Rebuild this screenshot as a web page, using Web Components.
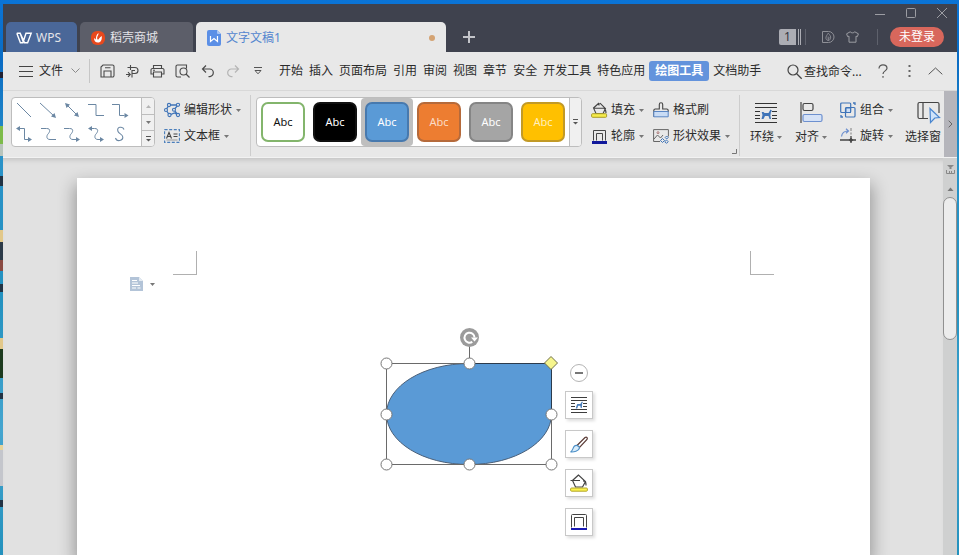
<!DOCTYPE html>
<html lang="zh-CN">
<head>
<meta charset="utf-8">
<title>文字文稿1</title>
<style>
html,body{margin:0;height:100%}
body{overflow:hidden;font:12px/16px "Noto Sans","Noto Sans CJK SC",sans-serif;color:#2b2b2b;
background:
linear-gradient(#0000 72px,#223 72px 78px,#0000 78px 126px,#7dbb4a 126px 144px,#b8c4bc 144px 156px,#0000 156px 176px,#234 176px 186px,#0000 186px 230px,#e2c88a 230px 242px,#2c3a48 242px 260px,#8a4a42 260px 271px,#0000 271px 284px,#234 284px 292px,#0000 292px 338px,#e2c88a 338px 349px,#1c3a1e 349px 378px,#0000 378px 393px,#234 393px 399px,#0000 399px 445px,#e6d49a 445px 450px,#c4c6cc 450px 486px,#0000 486px 500px,#234 500px 507px,#0000 507px) left/3px 100% no-repeat,
linear-gradient(#0b74d6 0,#0a6cc4 60px,#2a92c8 160px,#2492c0 300px,#45a5cf 430px,#2391bd 100%)}
</style>
</head>
<body>
<wps-window></wps-window>
<script>
const ICONS = {
  // [width, height, markup]
  wps:[16,12,'<path d="M.8 1.2h3.4l3 8.6L10 1.2h5.200l-3.600 9.600h-3L4.200 1.200M.8 1.200l3.600 9.600h2.800" fill="none" stroke="#fff" stroke-width="1.400"/>'],
  docer:[14,14,'<rect width="14" height="14" rx="6" fill="#e8491d"/><path d="M7.500 2c.4 2-1.400 3-1.400 5 0 .9.500 1.500.9 1.800C8.200 7.800 8.600 6.300 10.800 5c.3 3.500-.8 6.600-3.800 6.600C4.600 11.600 3 9.900 3 7.200c1 .3 1.700.8 2 1.500C4.700 6 5.400 3.500 7.500 2z" fill="#fff"/>'],
  writer:[14,16,'<path d="M2 0h8l4 4v10a2 2 0 0 1-2 2H2a2 2 0 0 1-2-2V2a2 2 0 0 1 2-2z" fill="#5b8fe6"/><path d="M10 0l4 4h-3a1 1 0 0 1-1-1z" fill="#a9c5f3"/><path d="M3.500 6v5.500l3.500-3 3.500 3V6" fill="none" stroke="#fff" stroke-width="1.200"/>'],
  plus:[12,12,'<path d="M6 0v12M0 6h12" stroke="#c3c4c9" stroke-width="2"/>'],
  min:[10,10,'<path d="M0 6.500h10" stroke="#9c9da3"/>'],
  max:[10,10,'<rect x=".5" y=".5" width="9" height="9" rx="1" fill="none" stroke="#9c9da3"/>'],
  close:[10,10,'<path d="M0 0l10 10M10 0L0 10" stroke="#9c9da3"/>'],
  leaf:[12,12,'<path d="M.5.500h6a5.500 5.500 0 0 1 0 11h-6z" fill="none" stroke="#8f9097"/><path d="M6.200 2.200C8 4 9 5.500 8.600 7.300 8.200 8.800 7.300 9.300 6.200 9.500 5 9.300 4 8.600 3.900 7.100 3.900 5.500 5 4 6.200 2.200zM6.200 10V5.500M6.200 8.200l1.600-1.500" fill="none" stroke="#8f9097" stroke-width=".9"/>'],
  shirt:[13,12,'<path d="M4.200.800C5 2.200 8 2.200 8.800.800L12.400 2.800 11.400 5.600 10 5.200v6H3v-6L1.600 5.600.600 2.800z" fill="none" stroke="#9c9da3"/>'],
  burger:[14,12,'<path d="M0 1.500h14M0 6.500h14M0 11.500h14" stroke="#444"/>'],
  down:[9,6,'<path d="M.5.500l4 4 4-4" fill="none" stroke="#8a8a8a"/>'],
  up:[15,8,'<path d="M.7 7.300L7.500 1l6.800 6.300" fill="none" stroke="#555"/>'],
  save:[15,14,'<path d="M3 1h9.500a1.500 1.500 0 0 1 1.500 1.500V11.500a1.500 1.500 0 0 1-1.500 1.500H1V3zM4 13V7h7v6M5 3.800h5.500" fill="none" stroke="#4a4a4a" stroke-width="1.100"/>'],
  convert:[15,14,'<path d="M2.500 3.500h7.500a3 3 0 0 1 0 6h-3M5.500 1v5M7 13.500V6.500h3M1 10.500h4.500M3 8.200l2.300 2.300L3 12.800" fill="none" stroke="#4a4a4a" stroke-width="1.100"/>'],
  print:[15,14,'<path d="M3.500 4.500v-3h8v3M3.500 10H1V6a1.500 1.500 0 0 1 1.500-1.500h10A1.500 1.500 0 0 1 14 6v4h-2.500M3.500 8h8v5h-8zM3 6.300h2" fill="none" stroke="#4a4a4a" stroke-width="1.100"/>'],
  preview:[15,14,'<path d="M6 13H2.500A1.500 1.500 0 0 1 1 11.500v-9A1.500 1.500 0 0 1 2.500 1h9v3.500" fill="none" stroke="#4a4a4a" stroke-width="1.100"/><circle cx="8.500" cy="7.500" r="3.500" fill="none" stroke="#4a4a4a" stroke-width="1.100"/><path d="M11 10l3.500 3.500" stroke="#4a4a4a" stroke-width="1.200"/>'],
  undo:[14,14,'<path d="M5 1.500L1.500 5 5 8.500M1.500 5h7.200a3.600 3.600 0 0 1 3.600 3.600A4 4 0 0 1 9 12.600H7.500" fill="none" stroke="#4a4a4a" stroke-width="1.200"/>'],
  redo:[14,14,'<path d="M9 1.500L12.500 5 9 8.500M12.500 5H5.300a3.600 3.600 0 0 0-3.600 3.600A4 4 0 0 0 5 12.600H6.500" fill="none" stroke="#b4b4b4" stroke-width="1.200"/>'],
  more:[8,8,'<path d="M0 .500h8" stroke="#555"/><path d="M1 3.500h6L4 6.800z" fill="none" stroke="#555"/>'],
  search:[15,15,'<circle cx="6" cy="6" r="5" fill="none" stroke="#444" stroke-width="1.200"/><path d="M9.700 9.700l5 5" stroke="#444" stroke-width="1.300"/>'],
  help:[10,14,'<path d="M1 4.500C1 2 2.800.800 5 .800S9 2.200 9 4.300C9 7 5 6.800 5 10M5 12v1.700" fill="none" stroke="#555" stroke-width="1.200"/>'],
  dots:[3,12,'<path d="M.5 0h2v2h-2zM.5 5h2v2h-2zM.5 10h2v2h-2z" fill="#666"/>'],
  tri:[5,3,'<path d="M0 0h5L2.500 3z" fill="#777"/>'],
  triup:[7,4,'<path d="M.5 4h6L3.500.5z" fill="#777"/>'],
  triupOff:[5,3,'<path d="M0 3h5L2.500 0z" fill="#b4b4b4"/>'],
  trimore:[5,6,'<path d="M0 .500h5" stroke="#555"/><path d="M0 3h5L2.500 5.500z" fill="#555"/>'],
  l1:[16,16,'<path d="M1 1l14 14" stroke="#6b87a3"/>'],
  l2:[16,16,'<path d="M0 1l14 13" stroke="#6b87a3"/><path d="M16 16l-5-1.500 3.500-3.500z" fill="#6b87a3"/>'],
  l3:[16,16,'<path d="M3 3l10 10" stroke="#6b87a3"/><path d="M15 15l-5-1.500 3.500-3.500zM1 1l5 1.500-3.500 3.500z" fill="#6b87a3"/>'],
  l4:[16,16,'<path d="M0 2.500h8v11h8" fill="none" stroke="#6b87a3"/>'],
  l5:[16,16,'<path d="M0 2.500h7.500v11h5" fill="none" stroke="#6b87a3"/><path d="M16.500 13.500l-4 2.500v-5z" fill="#6b87a3"/>'],
  l6:[16,16,'<path d="M3 2.500h5.500v11h4" fill="none" stroke="#6b87a3"/><path d="M16 13.500l-4 2.500v-5zM0 2.500L4 0v5z" fill="#6b87a3"/>'],
  l7:[16,16,'<path d="M1 2.500h5.500c5 0 3 4 1.500 5.500s-2 5.500 2 5.500h6" fill="none" stroke="#6b87a3"/>'],
  l8:[16,16,'<path d="M0 2.500h5.500c5 0 3 4 1.500 5.500s-2 5.500 2 5.500h4" fill="none" stroke="#6b87a3"/><path d="M16 13.500l-4 2.500v-5z" fill="#6b87a3"/>'],
  l9:[16,16,'<path d="M3 2.500h3.500c5 0 3 4 1.500 5.500s-2 5.500 2 5.500h3" fill="none" stroke="#6b87a3"/><path d="M16 13.500l-4 2.500v-5zM0 2.500L4 0v5z" fill="#6b87a3"/>'],
  l10:[16,16,'<path d="M12 3.500C11 0 4 .5 6 5.500 7 8 10.500 8 10.800 11c.3 3.500-6 5.500-7.300 1" fill="none" stroke="#6b87a3" stroke-width="1.100"/>'],
  edit:[17,16,'<path d="M5 3h9l-4 4.800 4 5.200-3.500-2-5 2L2 8z" fill="none" stroke="#3f74b8" stroke-width="1.300"/><g fill="#e8e8e8" stroke="#3f74b8" stroke-width="1.100"><circle cx="5" cy="3" r="1.600"/><circle cx="14" cy="2.800" r="1.600"/><circle cx="2" cy="8" r="1.500"/><circle cx="10" cy="7.800" r="1.500"/><circle cx="5.500" cy="13" r="1.600"/><circle cx="14" cy="13" r="1.600"/></g>'],
  textbox:[16,14,'<rect x=".6" y=".6" width="14.800" height="12.800" fill="none" stroke="#4a7ebb" stroke-width="1.100" stroke-dasharray="3 1.600"/><path d="M2.500 9.500L5 3.500l2.500 6M3.300 7.500h3.400M9.500 5h4M9.500 7.500h4" fill="none" stroke="#444" stroke-width="1.100"/><path d="M2.500 11h11" stroke="#999"/>'],
  fill:[17,16,'<path d="M8 1L2.500 6l2.500 5.500h7L14.500 6.500 9 1.200M2.500 6.200h10.500c2 1 2 3 2 5M8 1v2.500" fill="none" stroke="#444" stroke-width="1.100"/><rect x=".6" y="11.700" width="15" height="3.600" rx="1" fill="#f6ec4a" stroke="#a99c28"/>'],
  outline:[15,15,'<path d="M1.500 11.500V1.500h12v10M4.500 11.500V4.500h6v7" fill="none" stroke="#444"/><rect y="12" width="15" height="3" fill="#10189b"/>'],
  painter:[16,16,'<path d="M.8 14.800V8.500a1.500 1.500 0 0 1 1.500-1.500h4v-4.500a1.700 1.700 0 0 1 3.400 0V7h4a1.500 1.500 0 0 1 1.500 1.500V9.500H.8" fill="none" stroke="#444" stroke-width="1.100"/><path d="M.8 9.500h14.400v5.300H.8z" fill="#c9dcf5" stroke="#5a86c4"/>'],
  effects:[16,15,'<path d="M7 12.500H.6V.600h14.800V7.500M1 10l3.500-4 3 3 2.500-3" fill="none" stroke="#666"/><circle cx="5" cy="3.700" r="1" fill="none" stroke="#a77"/><path d="M9.500 9.500l2 2-2 2-2-2zM13.700 7l1.500 1.500-1.500 1.500-1.500-1.500zM13.500 11l1.700 1.700-1.700 1.700-1.700-1.700z" fill="none" stroke="#3f74b8"/>'],
  wrap:[22,20,'<path d="M0 .5h22M0 4.500h22M0 8.500h5M17 8.500h5M0 12.500h5M17 12.500h5M0 15.500h5M17 15.500h5M0 19.500h22" stroke="#333"/><path d="M6.500 16l1-4-.8-3L8.500 9l1 1h4l2-3.500 1.700 1.500-1.200.7-.6 3.800.6 3.500h-1.500l-1-3H10l-1.500 3z" fill="#3f74b8"/>'],
  align:[23,21,'<path d="M1 0v21" stroke="#444" stroke-width="1.200"/><rect x="3" y="1.500" width="10" height="7" rx="1.500" fill="none" stroke="#444" stroke-width="1.200"/><rect x="3" y="12.500" width="19" height="7" rx="1.500" fill="#d5e2f7" stroke="#6d90cf" stroke-width="1.200"/>'],
  group:[16,16,'<rect x=".7" y="1" width="10" height="9.500" rx="1" fill="none" stroke="#3f74b8" stroke-width="1.200"/><rect x="5.500" y="5.500" width="9.500" height="9.500" rx="1" fill="none" stroke="#3f74b8" stroke-width="1.200"/><rect x="6" y="6" width="4.500" height="4.500" fill="#cfe0f6" stroke="#3f74b8"/><path d="M13 1h2v2M1 13v2h2" fill="none" stroke="#3f74b8" stroke-width="1.300"/>'],
  rotate:[16,16,'<path d="M1.500 8.500C2 5 4.500 3 8 3M6 .700L8.500 3 6 5.300" fill="none" stroke="#6d90cf" stroke-width="1.200"/><path d="M11 0v3M11 4.500v2" stroke="#888" stroke-width="1.100"/><path d="M0 12h16M11 8v7" stroke="#444" stroke-width="1.300"/><path d="M11 9.700l2.300 2.300-2.300 2.300L8.700 12z" fill="#444"/>'],
  pane:[24,23,'<path d="M11 17.500H2.500a1.500 1.500 0 0 1-1.500-1.500V3a1.500 1.500 0 0 1 1.500-1.500h18A1.500 1.500 0 0 1 22 3v9M6 1.500v16" fill="none" stroke="#444" stroke-width="1.200"/><path d="M13 7.500l9.500 9-4.700.500-4.300 4.500z" fill="#cfe3fa" stroke="#4a86cf" stroke-width="1.200"/>'],
  right:[5,8,'<path d="M.7.700L4 4 .7 7.300" fill="none" stroke="#666"/>'],
  corner:[5,5,'<path d="M4.500 0v4.500H0" fill="none" stroke="#777"/>'],
  ruler:[9,9,'<path d="M1.500 0h6v1h-1v1h-1v2h-2V2h-1V1h-1z" fill="#888"/><path d="M.5 5v3.500h8V5M3.500 6v2M5.500 6v2" fill="none" stroke="#888"/>'],
  paste:[13,14,'<path d="M0 0h9l4 4v10H0z" fill="#b3c4d8"/><path d="M9 0v4h4z" fill="#e4ebf2"/><path d="M2 3.500h5M2 6h6M2 8.500h8M2 11h4M7.500 11h3" stroke="#fff" stroke-width="1.200"/>'],
  minus:[8,2,'<path d="M0 1h8" stroke="#777" stroke-width="2"/>'],
  wrapS:[16,17,'<path d="M0 .5h16M0 3.500h16M0 6.500h4M12 6.500h4M0 9.500h4M12 9.500h4M0 12.500h16M0 15.500h16" stroke="#3d3d3d"/><path d="M4.800 11.500l.8-3 .7-1.500h3l1.700-2.500 1 .8-.8.700-.4 5h-1L9.200 8.800H7.200l-1 2.700z" fill="#4a7ebb"/>'],
  brush:[18,17,'<path d="M7 9.500L15 1.500c1.500-1 3 .3 2 2L9.500 11.500z" fill="#fff" stroke="#5a3b36" stroke-width="1.200"/><path d="M.5 16c2.500-1 2-4 4-6 1.500-1.200 4.500-.5 5 2-.8 3.200-5.500 4.300-9 4z" fill="#d8ecfa" stroke="#4b8fc7" stroke-width="1.100"/>'],
  fillS:[18,18,'<path d="M8.500 1L2.500 6.500 5.500 13h7L15.500 7.500z M.5 6.500h9.500M13 7c3 0 3 2 3 4.500" fill="none" stroke="#444" stroke-width="1.200"/><rect x=".6" y="14" width="16.800" height="3.200" rx="1" fill="#fbf34e" stroke="#b3a62c"/>'],
  outlineS:[16,16,'<path d="M.5 13.500V1.500a1 1 0 0 1 1-1h13a1 1 0 0 1 1 1v12M3.500 12.500V3.500h9v9" fill="none" stroke="#444"/><rect y="14" width="16" height="2" fill="#1a1ab4"/>'],
  shape:[186,146,'<path d="M469.500 363.500H551.500V414c0 28-36.500 50.500-82.500 50.500S386.500 442 386.500 414s37-50.500 83-50.500z" fill="#5a9ad6" stroke="#4b6079"/><path d="M386.500 363.500H551.500V464.500H386.500zM469.500 346V363" fill="none" stroke="#6a6a6a"/><path d="M469.500 363.500H551.500V414" fill="none" stroke="#2c3b4c"/><circle cx="469.500" cy="337.500" r="9.500" fill="#9b9b9b"/><path d="M472.300 341.800a5 5 0 1 1 2.200-4.300" fill="none" stroke="#fff" stroke-width="2"/><path d="M471 337.500h7l-3.500 4z" fill="#fff"/><g fill="#fff" stroke="#777"><circle cx="386.500" cy="363.500" r="5.500"/><circle cx="469.500" cy="363.500" r="5.500"/><circle cx="386.500" cy="414.500" r="5.500"/><circle cx="551.500" cy="414.500" r="5.500"/><circle cx="386.500" cy="464.500" r="5.500"/><circle cx="469.500" cy="464.500" r="5.500"/><circle cx="551.500" cy="464.500" r="5.500"/></g><path d="M551 356.500l6.500 6.500-6.500 6.500-6.500-6.500z" fill="#f6f58c" stroke="#6f6f4a"/>','376 326 186 146']
};
const BASE = `*{box-sizing:border-box}button,input{font:inherit;color:inherit;background:none;border:0;padding:0;margin:0}
button{display:flex;align-items:center;justify-content:center;white-space:nowrap}`;
function define(name, html, setup){
  const t = document.createElement('template');
  t.innerHTML = html.replace('<style>', '<style>' + BASE);
  customElements.define(name, class extends HTMLElement{
    connectedCallback(){
      if(this.shadowRoot) return;
      this.attachShadow({mode:'open'}).append(t.content.cloneNode(true));
      if(setup) setup(this, this.shadowRoot);
    }
  });
}

define('wps-icon','<style>:host{display:inline-flex;flex:none}svg{display:block;overflow:visible}</style><span></span>',(el,root)=>{
  const [w,h,body,box] = ICONS[el.getAttribute('name')];
  root.querySelector('span').innerHTML = `<svg width="${w}" height="${h}" viewBox="${box||`0 0 ${w} ${h}`}" aria-hidden="true">${body}</svg>`;
});

define('icon-button','<style>:host{display:flex;flex:none}button{width:100%;height:100%}</style><button></button>',(el,root)=>{
  const button = root.querySelector('button');
  button.setAttribute('aria-label', el.getAttribute('label'));
  button.innerHTML = `<wps-icon name="${el.getAttribute('icon')}"></wps-icon>`;
});

define('doc-tab',`<style>
:host{display:flex;height:30px;background:#5c5e69;color:#e4e4e8;border-radius:5px 5px 0 0}
:host([kind=home]){background:#4a6798}
:host([kind=active]){background:#e8e8e8;color:#5486cf}
button{flex:1;justify-content:flex-start;gap:5px;padding:2px 11px 0}
:host([kind=home]) button{gap:4px;padding:2px 10px 0}
i{width:6px;height:6px;border-radius:3px;background:#d4a373;margin-left:auto}
:host(:not([kind=active])) i{display:none}
</style><button><slot name="icon"></slot><slot></slot><i></i></button>`);

define('title-bar',`<style>
:host{display:flex;height:48px;background:#3f424e;align-items:flex-end}
.tabs{display:flex;gap:3px;padding-left:3px;align-items:flex-end}
.home{width:71px}.store{width:113px}.doc{width:250px}
.add{width:46px;height:30px}
.side{margin-left:auto;height:48px;display:flex;flex-direction:column;align-items:flex-end}
.win{display:flex;height:18px}.win icon-button{width:31px;height:18px}
.tools{display:flex;align-items:center;height:30px;padding-right:13px}
.count{width:17px;height:16px;background:#acadb4;color:#33353f;border-radius:2px 0 0 2px}
.bars{width:5px;height:16px;border-left:1px solid #3f424e;border-right:1px solid #acadb4;margin-right:4px;background:linear-gradient(90deg,#0000 0 1px,#acadb4 1px 2px,#0000 2px)}
hr{width:1px;height:16px;border:0;margin:0;background:#5e616c}
.tools icon-button{width:24px;height:24px}
.a{margin-left:10px}.b{margin-right:13px}
.login{width:54px;height:20px;border-radius:10px;background:#d8675c;color:#fff;margin-left:12px}
</style>
<div class="tabs"><doc-tab class="home" kind="home"><wps-icon slot="icon" name="wps"></wps-icon>WPS</doc-tab>
<doc-tab class="store"><wps-icon slot="icon" name="docer"></wps-icon>稻壳商城</doc-tab>
<doc-tab class="doc" kind="active"><wps-icon slot="icon" name="writer"></wps-icon>文字文稿1</doc-tab></div>
<icon-button class="add" icon="plus" label="新建标签"></icon-button>
<div class="side"><div class="win"><icon-button icon="min" label="最小化"></icon-button><icon-button icon="max" label="最大化"></icon-button><icon-button icon="close" label="关闭"></icon-button></div>
<div class="tools"><button class="count">1</button><span class="bars"></span><hr><icon-button class="a" icon="leaf" label="稻壳"></icon-button><icon-button class="b" icon="shirt" label="皮肤"></icon-button><hr><button class="login">未登录</button></div></div>`);

define('menu-tab',`<style>:host{display:block;flex:none}button{height:20px;padding:0 3px;border-radius:3px}
:host([active]) button{background:#6393dc;color:#fff;font-weight:700;padding:0 6px}</style><button><slot></slot></button>`);

define('menu-bar',`<style>
:host{display:flex;height:39px;align-items:center;background:#e8e8e8;border-bottom:1px solid #d8d8d8;padding-left:16px}
.file{gap:6px;padding-right:9px}.file .d{margin-left:2px}
hr{width:1px;height:24px;border:0;margin:0 5px 0 0;background:#c6c6c6}
.quick{display:flex;padding-right:6px}.quick icon-button{width:25px;height:24px}
nav{display:flex;align-items:center}
nav menu-tab[active]{padding:0 1px 0 1px}
.right{margin-left:auto;display:flex;align-items:center;padding-right:9px}
label{display:flex;align-items:center;gap:2px}
input{width:66px;height:20px;outline:0}input::placeholder{color:#2b2b2b;opacity:1}
.right icon-button{width:26px;height:24px}
</style>
<button class="file"><wps-icon name="burger"></wps-icon>文件<wps-icon class="d" name="down"></wps-icon></button><hr>
<div class="quick"><icon-button icon="save" label="保存"></icon-button><icon-button icon="convert" label="转换"></icon-button><icon-button icon="print" label="打印"></icon-button><icon-button icon="preview" label="打印预览"></icon-button><icon-button icon="undo" label="撤消"></icon-button><icon-button icon="redo" label="恢复"></icon-button><icon-button icon="more" label="更多"></icon-button></div>
<nav><menu-tab>开始</menu-tab><menu-tab>插入</menu-tab><menu-tab>页面布局</menu-tab><menu-tab>引用</menu-tab><menu-tab>审阅</menu-tab><menu-tab>视图</menu-tab><menu-tab>章节</menu-tab><menu-tab>安全</menu-tab><menu-tab>开发工具</menu-tab><menu-tab>特色应用</menu-tab><menu-tab active>绘图工具</menu-tab><menu-tab>文档助手</menu-tab></nav>
<div class="right"><label><wps-icon name="search"></wps-icon><input aria-label="查找命令" placeholder="查找命令..."></label><icon-button icon="help" label="帮助"></icon-button><icon-button icon="dots" label="选项"></icon-button><icon-button icon="up" label="收起功能区"></icon-button></div>`);

define('ribbon-command',`<style>
:host{display:block;flex:none}button{gap:4px;height:20px}
.i{width:16px;display:flex;justify-content:center}
:host([plain]) .m{display:none}
:host([large]) button{display:grid;grid-template-columns:auto auto;gap:5px 3px;height:auto}
:host([large]) .i{grid-column:1/-1;width:auto;height:23px;align-items:center}
:host([large][plain]) button{grid-template-columns:auto}
:host([large][plain]) .i{justify-content:flex-end}
</style><button><span class="i"><slot name="icon"></slot></span><slot></slot><wps-icon class="m" name="tri"></wps-icon></button>`);

define('line-gallery',`<style>
:host{display:flex;flex:none;width:144px;height:50px;background:#fff;border:1px solid #bdbdbd;border-radius:4px;overflow:hidden}
.cells{flex:1;display:grid;grid-template-columns:repeat(5,24px);grid-template-rows:24px 24px}
.bar{width:13px;display:grid;grid-template-rows:1fr 1fr 1fr;background:#f0f0f0;border-left:1px solid #bdbdbd}
.bar icon-button+icon-button{border-top:1px solid #bdbdbd}
</style><div class="cells"></div><div class="bar"><icon-button icon="triupOff" label="上一行"></icon-button><icon-button icon="tri" label="下一行"></icon-button><icon-button icon="trimore" label="更多形状"></icon-button></div>`,(el,root)=>{
  root.querySelector('.cells').innerHTML = ['直线','箭头','双箭头','肘形连接符','肘形箭头','肘形双箭头','曲线连接符','曲线箭头','曲线双箭头','曲线'].map((n,i)=>`<icon-button icon="l${i+1}" label="${n}"></icon-button>`).join('');
});

define('style-swatch',`<style>
:host{display:flex;flex:none;width:52px;height:48px;align-items:center;justify-content:center;border-radius:4px}
:host([selected]){background:#bfbfbf}
button{width:44px;height:40px;border-radius:7px;border:2px solid var(--line);background:var(--fill);color:var(--ink,#fff);font-size:11px}
</style><button><slot></slot></button>`);

define('style-gallery',`<style>
:host{display:flex;flex:none;height:50px;background:#fff;border:1px solid #bdbdbd;border-radius:4px;overflow:hidden}
icon-button{width:12px;background:#f0f0f0;border-left:1px solid #bdbdbd}
</style><slot></slot><icon-button icon="trimore" label="更多样式"></icon-button>`);

define('drawing-ribbon',`<style>
:host{display:flex;height:67px;background:#e8e8e8;border-bottom:1px solid #f2f2f2}
.groups{flex:1;min-width:0;display:flex;overflow:hidden;padding:6px 0 0 8px}
.col{display:grid;gap:6px;align-content:start;justify-items:start;padding-top:3px;flex:none}
.two{grid-template-columns:auto auto;gap:6px 9px;padding-left:9px}
.gap{padding:3px 9px 0}
hr{width:1px;height:61px;border:0;margin:-2px 5px 0 0;background:#cdcdcd;flex:none}
.launch{align-self:flex-end;width:9px;height:12px}
.last{margin-right:10px}
.big{padding-top:4px;margin-right:13px}
.arr{margin-right:12px}
.scroll{width:13px;background:#b5b5bb}
</style>
<div class="groups">
<line-gallery></line-gallery>
<div class="col gap"><ribbon-command><wps-icon slot="icon" name="edit"></wps-icon>编辑形状</ribbon-command><ribbon-command><wps-icon slot="icon" name="textbox"></wps-icon>文本框</ribbon-command></div>
<hr>
<style-gallery>
<style-swatch style="--fill:#fff;--line:#83b56c;--ink:#111">Abc</style-swatch><style-swatch style="--fill:#000;--line:#111">Abc</style-swatch><style-swatch selected style="--fill:#5a9ad6;--line:#4779ae">Abc</style-swatch><style-swatch style="--fill:#ed7d31;--line:#b56a3b;--ink:#fbdcc6">Abc</style-swatch><style-swatch style="--fill:#a5a5a5;--line:#858585">Abc</style-swatch><style-swatch style="--fill:#ffc000;--line:#c29a26;--ink:#ffefbd">Abc</style-swatch>
</style-gallery>
<div class="col two"><ribbon-command><wps-icon slot="icon" name="fill"></wps-icon>填充</ribbon-command><ribbon-command plain><wps-icon slot="icon" name="painter"></wps-icon>格式刷</ribbon-command><ribbon-command><wps-icon slot="icon" name="outline"></wps-icon>轮廓</ribbon-command><ribbon-command><wps-icon slot="icon" name="effects"></wps-icon>形状效果</ribbon-command></div>
<icon-button class="launch" icon="corner" label="形状格式设置"></icon-button>
<hr class="last">
<ribbon-command large class="big"><wps-icon slot="icon" name="wrap"></wps-icon>环绕</ribbon-command>
<ribbon-command large class="big"><wps-icon slot="icon" name="align"></wps-icon>对齐</ribbon-command>
<div class="col arr"><ribbon-command><wps-icon slot="icon" name="group"></wps-icon>组合</ribbon-command><ribbon-command><wps-icon slot="icon" name="rotate"></wps-icon>旋转</ribbon-command></div>
<ribbon-command large plain class="big"><wps-icon slot="icon" name="pane"></wps-icon>选择窗</ribbon-command>
</div>
<icon-button class="scroll" icon="right" label="向右滚动"></icon-button>`);

define('float-tools',`<style>
:host{display:grid;gap:11px;justify-items:center}
.min{width:18px;height:18px;border:1px solid #b4b4b4;border-radius:9px;background:#fff;margin-bottom:-2px}
.t{width:28px;height:28px;background:#fff;border:1px solid #c8c8c8;box-shadow:2px 2px 3px #0002}
</style><icon-button class="min" icon="minus" label="收起"></icon-button><icon-button class="t" icon="wrapS" label="布局选项"></icon-button><icon-button class="t" icon="brush" label="形状样式"></icon-button><icon-button class="t" icon="fillS" label="形状填充"></icon-button><icon-button class="t" icon="outlineS" label="形状轮廓"></icon-button>`);

define('doc-page',`<style>
:host{display:block;flex:1;background:#fff;position:relative;box-shadow:0 8px 16px 2px #0005}
.marks{display:flex;justify-content:space-between;padding:73px 96px 0}
.marks i{width:24px;height:24px;border-bottom:1px solid #b0b0b0}
.marks i:first-child{border-right:1px solid #b0b0b0}.marks i:last-child{border-left:1px solid #b0b0b0}
.paste{margin:2px 0 0 53px;gap:7px;height:14px}
.shape,float-tools{position:absolute}
.shape{left:299px;top:148px}float-tools{left:488px;top:186px}
</style><div class="marks"><i></i><i></i></div><button class="paste" aria-label="粘贴选项"><wps-icon name="paste"></wps-icon><wps-icon name="tri"></wps-icon></button><wps-icon class="shape" name="shape"></wps-icon><float-tools></float-tools>`);

define('scroll-rail',`<style>
:host{display:flex;flex-direction:column;width:14px;background:#cfd0d0;align-items:center;flex:none}
.r{height:22px;width:14px}.u{height:17px;width:14px}
div{width:14px;height:36%;border:1px solid #909090;border-radius:7px;background:#ececec}
</style><icon-button class="r" icon="ruler" label="标尺"></icon-button><icon-button class="u" icon="triup" label="向上滚动"></icon-button><div></div>`);

define('wps-window',`<style>
:host{display:flex;flex-direction:column;height:100vh;padding:4px 2px 0 3px;box-sizing:border-box}
.work{flex:1;min-height:0;display:flex;background:#e1e1e1}
.canvas{flex:1;display:flex;padding:20px 73px 0 74px;overflow:hidden;box-shadow:inset 0 5px 5px -3px #0002}
</style><title-bar></title-bar><menu-bar></menu-bar><drawing-ribbon></drawing-ribbon><div class="work"><div class="canvas"><doc-page></doc-page></div><scroll-rail></scroll-rail></div>`);
</script>
</body>
</html>
